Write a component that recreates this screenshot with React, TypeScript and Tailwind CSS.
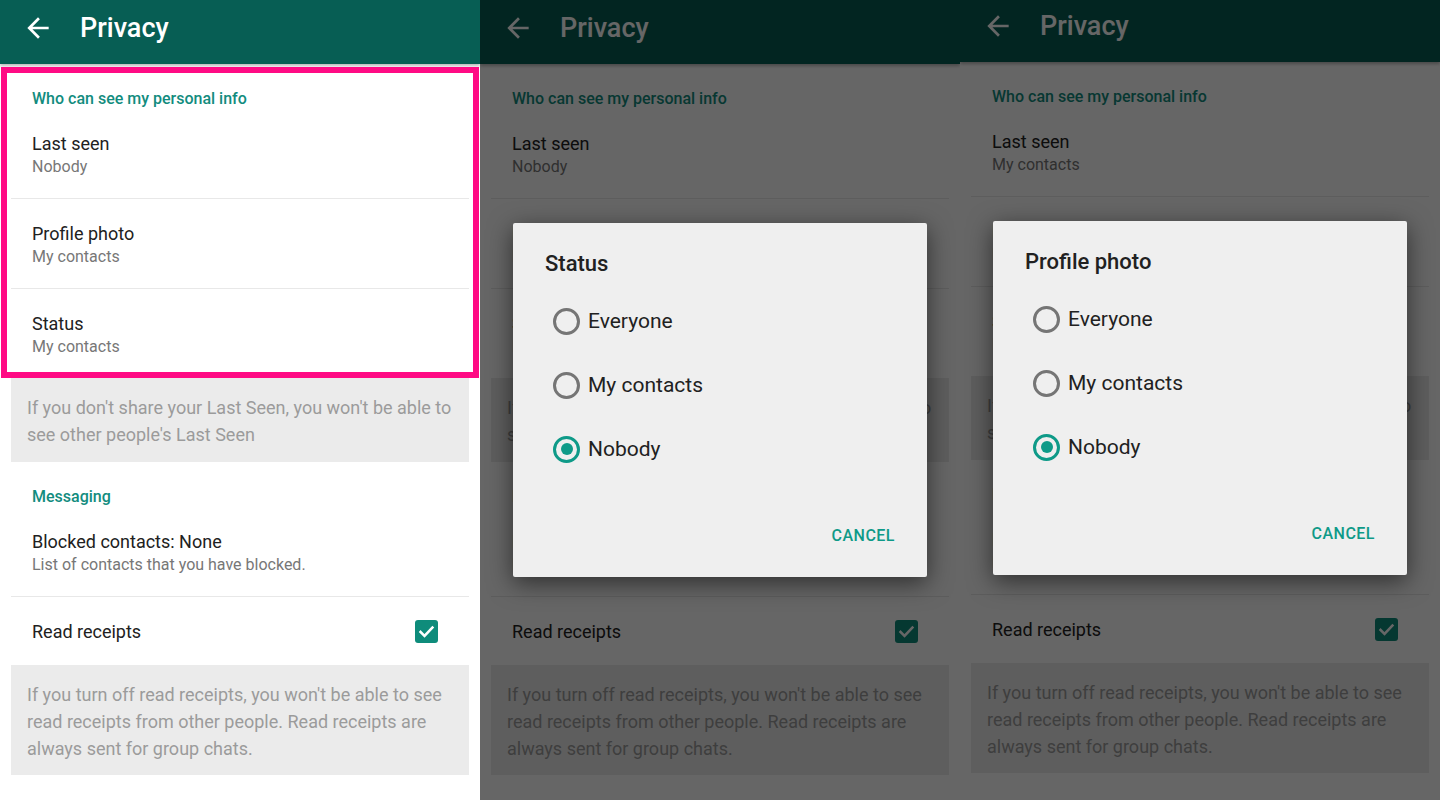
import React from "react";

function BackArrow() {
  return (
    <svg width="32" height="32" viewBox="0 0 24 24" fill="#ffffff">
      <path d="M20 11H7.83l5.59-5.59L12 4l-8 8 8 8 1.41-1.41L7.83 13H20v-2z" />
    </svg>
  );
}

function SectionHeader({ children }: { children: React.ReactNode }) {
  return (
    <div className="px-[32px] pt-[24px] text-[16px] leading-[21px] font-medium text-[#128c7e]">
      {children}
    </div>
  );
}

function Row({ title, subtitle, divider }: { title: string; subtitle: string; divider?: boolean }) {
  return (
    <div>
      <div className="px-[32px] pt-[24px] pb-[21px]">
        <div className="text-[18px] leading-[22px] text-[#212121]">{title}</div>
        <div className="mt-[2px] text-[16px] leading-[20px] text-[#777777]">{subtitle}</div>
      </div>
      {divider && <div className="mx-[11px] h-px bg-[#e8e8e8]" />}
    </div>
  );
}

function InfoBox({ lines, className }: { lines: string[]; className: string }) {
  return (
    <div className={"mx-[11px] bg-[#ebebeb] px-[16px] text-[18px] leading-[27px] text-[#9b9b9b] " + className}>
      {lines.map((l) => (
        <div key={l} className="whitespace-nowrap">
          {l}
        </div>
      ))}
    </div>
  );
}

function Radio({ checked }: { checked: boolean }) {
  if (checked) {
    return (
      <div className="w-[27px] h-[27px] rounded-full border-[3px] border-[#0e9a88] flex items-center justify-center">
        <div className="w-[12px] h-[12px] rounded-full bg-[#0e9a88]" />
      </div>
    );
  }
  return <div className="w-[27px] h-[27px] rounded-full border-[3px] border-[#757575]" />;
}

function Dialog({ title, selected }: { title: string; selected: string }) {
  const opts = ["Everyone", "My contacts", "Nobody"];
  return (
    <div className="w-[414px] h-[354px] rounded-[2px] bg-[#efefef] shadow-[0_6px_24px_rgba(0,0,0,0.55)] flex flex-col">
      <div className="pl-[32px] pt-[28px] text-[22px] leading-[26px] font-medium text-[#212121]">{title}</div>
      <div className="mt-[12px]">
        {opts.map((o) => (
          <div key={o} className="h-[64px] flex items-center pl-[40px]">
            <Radio checked={o === selected} />
            <span className="ml-[8px] text-[21px] leading-[26px] text-[#212121]">{o}</span>
          </div>
        ))}
      </div>
      <div className="mt-[45px] flex justify-end pr-[32px] text-[16px] leading-[20px] font-medium tracking-[0.5px] text-[#0e9a88]">
        CANCEL
      </div>
    </div>
  );
}

function Panel({
  lastSeen,
  dialog,
  highlight,
  shift,
}: {
  lastSeen: string;
  dialog?: { title: string; selected: string };
  highlight?: boolean;
  shift?: boolean;
}) {
  return (
    <div className={"relative w-[480px] h-[800px] overflow-hidden " + (dialog ? "bg-[#666666]" : "bg-white")}>
      <div className={"relative h-[800px] bg-white " + (shift ? "-mt-[2px]" : "")}>
        <div className="relative z-10 h-[64px] bg-[#075e54] shadow-[0_2px_3px_rgba(0,0,0,0.28)] flex items-start pt-[12px] pl-[22px]">
          <BackArrow />
          <div className="ml-[26px] text-[27px] leading-[32px] font-medium text-white">Privacy</div>
        </div>

        <SectionHeader>Who can see my personal info</SectionHeader>
        <Row title="Last seen" subtitle={lastSeen} divider />
        <Row title="Profile photo" subtitle="My contacts" divider />
        <Row title="Status" subtitle="My contacts" />
        <InfoBox
          className="pt-[16px] pb-[14px]"
          lines={["If you don't share your Last Seen, you won't be able to", "see other people's Last Seen"]}
        />

        <SectionHeader>Messaging</SectionHeader>
        <Row title="Blocked contacts: None" subtitle="List of contacts that you have blocked." divider />
        <div className="h-[68px] flex items-center justify-between pl-[32px] pr-[42px]">
          <span className="pt-[1px] text-[18px] leading-[22px] text-[#212121]">Read receipts</span>
          <div className="w-[23px] h-[23px] rounded-[3px] bg-[#0e8c7b] flex items-center justify-center">
            <svg width="19" height="19" viewBox="0 0 24 24" fill="none" stroke="#ffffff" strokeWidth="3.2" strokeLinecap="square">
              <polyline points="4.5,12.5 9.5,17.5 19.5,7" />
            </svg>
          </div>
        </div>
        <InfoBox
          className="pt-[16px] pb-[13px]"
          lines={[
            "If you turn off read receipts, you won't be able to see",
            "read receipts from other people. Read receipts are",
            "always sent for group chats.",
          ]}
        />

        {highlight && (
          <div className="absolute left-[1px] top-[67px] w-[478px] h-[311px] border-[6px] border-[#ff0a84] pointer-events-none z-20" />
        )}
        {dialog && (
          <div className="absolute inset-0 z-30 bg-black/60 flex items-center justify-center">
            <Dialog title={dialog.title} selected={dialog.selected} />
          </div>
        )}
      </div>
    </div>
  );
}

export default function App() {
  return (
    <div className="w-[1440px] h-[800px] flex overflow-hidden font-['Roboto',sans-serif]">
      <Panel lastSeen="Nobody" highlight />
      <Panel lastSeen="Nobody" dialog={{ title: "Status", selected: "Nobody" }} />
      <Panel lastSeen="My contacts" dialog={{ title: "Profile photo", selected: "Nobody" }} shift />
    </div>
  );
}
